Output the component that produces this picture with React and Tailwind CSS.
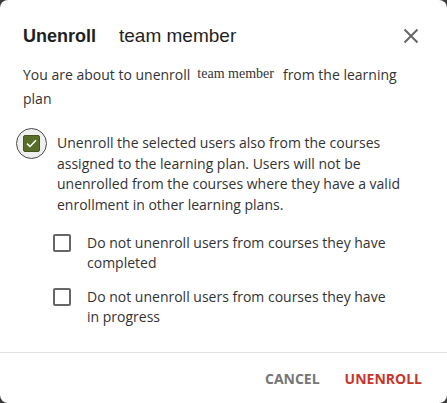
import React from "react";

function CloseIcon() {
  return (
    <svg width="16" height="16" viewBox="0 0 16 16" className="text-[#666]">
      <path d="M1.5 1.5 14.5 14.5 M14.5 1.5 1.5 14.5" stroke="currentColor" strokeWidth="2" fill="none" />
    </svg>
  );
}

function CheckedBox() {
  return (
    <div className="relative w-[17px] h-[17px] mt-[2px] shrink-0">
      {/* focus ring */}
      <div className="absolute -left-[7px] -top-[7px] w-[31px] h-[31px] rounded-full border-[1.5px] border-[#4a4a4a] bg-[#efefef]" />
      <div className="absolute inset-0 rounded-[2px] bg-[#586d28] border border-[#435520] flex items-center justify-center">
        <svg width="11" height="9" viewBox="0 0 11 9">
          <path d="M1 4.6 4 7.5 10 1.3" stroke="#fff" strokeWidth="1.5" fill="none" />
        </svg>
      </div>
    </div>
  );
}

function EmptyBox() {
  return <div className="w-[18px] h-[18px] mt-px shrink-0 rounded-[2px] border-2 border-[#666] bg-white" />;
}

export default function App() {
  const subOptions = [
    "Do not unenroll users from courses they have completed",
    "Do not unenroll users from courses they have in progress",
  ];

  return (
    <div className="w-[447px] h-[403px] bg-[#3b3b3b]">
      <div className="w-full h-full bg-white rounded-[8px] flex flex-col font-['Open_Sans',sans-serif] text-[#333]">
        <div className="flex items-center justify-between pl-[23px] pr-[28px] pt-[24px]">
          <h2 className="text-[19px] leading-[24px] text-[#1f1f1f] font-['Liberation_Sans',Arial,sans-serif]">
            <span className="font-bold text-[18px]">Unenroll</span>
            <span className="ml-[23px]">team member</span>
          </h2>
          <button className="p-0">
            <CloseIcon />
          </button>
        </div>

        <div className="px-[23px] pt-[14px]">
          <p className="text-[14px] leading-[24px]">
            You are about to unenroll
            <span className="ml-[7px] mr-[9px] font-['Liberation_Serif',serif] text-[14px] align-[2px]">team member</span>
            from the learning plan
          </p>

          <div className="mt-[22px] flex gap-[17px] items-start">
            <CheckedBox />
            <p className="text-[14px] leading-[20.5px] pr-[2px]">
              Unenroll the selected users also from the courses assigned to the learning plan. Users will not be
              unenrolled from the courses where they have a valid enrollment in other learning plans.
            </p>
          </div>

          <div className="pl-[30px] mt-[18px] flex flex-col gap-[14px]">
            {subOptions.map((label) => (
              <div key={label} className="flex gap-[16px] items-start">
                <EmptyBox />
                <p className="text-[14px] leading-[20px] max-w-[305px]">{label}</p>
              </div>
            ))}
          </div>
        </div>

        <div className="mt-[25px] border-t border-[#e2e2e2]" />

        <div className="flex justify-end items-center gap-[25px] pr-[25px] pt-[16px]">
          <button className="text-[14px] leading-[20px] font-bold text-[#767676]">CANCEL</button>
          <button className="text-[14px] leading-[20px] font-bold text-[#c9352b]">UNENROLL</button>
        </div>
      </div>
    </div>
  );
}
